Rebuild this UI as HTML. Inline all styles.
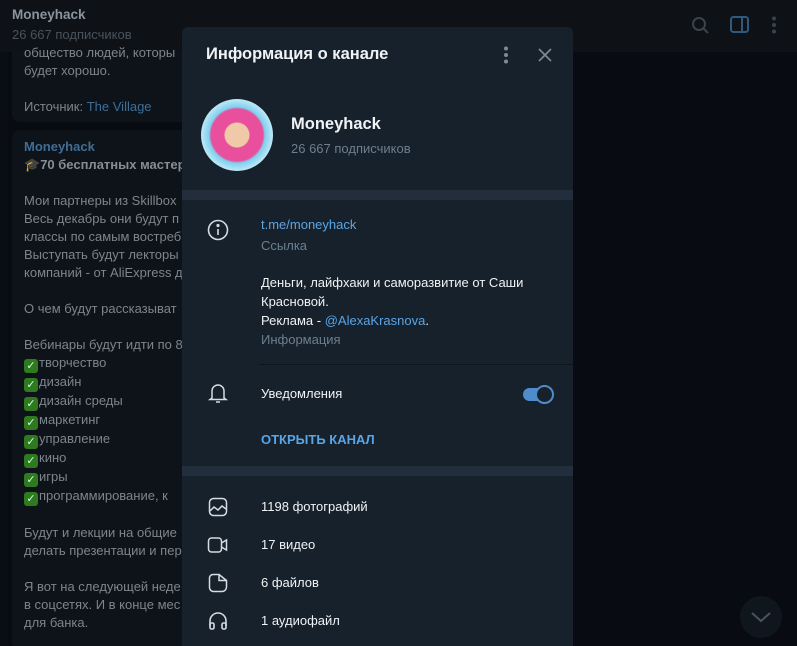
<!DOCTYPE html>
<html style="background:#080b11;overflow:hidden"><head><meta charset="utf-8"><style>
*{margin:0;padding:0;box-sizing:border-box}
body{width:797px;height:646px;overflow:hidden;background:#080b11;font-family:"Liberation Sans","DejaVu Sans",sans-serif;position:relative;font-size:13px}
.hdr{position:absolute;left:0;top:0;width:797px;height:52px;background:#0e1217}
.hdr .t{position:absolute;left:12px;top:7px;color:#8b939c;font-weight:bold;font-size:13.5px}
.hdr .s{position:absolute;left:12px;top:27px;color:#4a525b;font-size:13px}
.strip{position:absolute;left:0;top:52px;width:8px;height:594px;background:#0a0d12}
.bub{position:absolute;left:12px;background:#0e131a;border-radius:8px}
.tx{position:absolute;left:24px;color:#7d848c;font-size:13px;line-height:18px;white-space:pre}
.lk{color:#3d6f99}
.ck{display:inline-block;width:14px;height:14px;background:#2f7a1f;border-radius:3px;vertical-align:-2px;color:#cfd;font-size:11px;line-height:14px;text-align:center;margin-right:1px}
.panel{position:absolute;left:182px;top:27px;width:391px;height:619px;background:#17212b;border-radius:6px 6px 0 0;overflow:hidden}
.panel *{position:absolute}
.w{color:#f0f3f5}
.g{color:#6d7f8f}
.b{color:#5aa5e6}
.band{left:0;width:391px;height:10px;background:#232e3c}
.txt{font-size:13px;white-space:nowrap}
</style></head><body>
<div class="strip"></div>
<div class="bub" style="top:40px;width:180px;height:82px"></div>
<div class="bub" style="top:130px;width:180px;height:520px"></div>
<div class="hdr"><div class="t">Moneyhack</div><div class="s">26 667 подписчиков</div>
<svg style="position:absolute;left:690px;top:15px" width="22" height="22" viewBox="0 0 22 22" fill="none" stroke="#3a424a" stroke-width="2"><circle cx="9" cy="9" r="6"/><path d="M13.5 13.5 18 18"/></svg>
<svg style="position:absolute;left:730px;top:16px" width="20" height="18" viewBox="0 0 20 18" fill="none" stroke="#2f5a80" stroke-width="2"><rect x="1" y="1" width="17" height="15" rx="2.5"/><path d="M12 1v15"/></svg>
<svg style="position:absolute;left:770px;top:16px" width="8" height="18"><circle cx="4" cy="2.5" r="2" fill="#3a424a"/><circle cx="4" cy="9" r="2" fill="#3a424a"/><circle cx="4" cy="15.5" r="2" fill="#3a424a"/></svg>
</div>
<div class="tx" style="top:44px">общество людей, которы
будет хорошо.

Источник: <span class="lk">The Village</span></div>
<div class="tx" style="top:138px"><b style="color:#3f6d94">Moneyhack</b>
🎓<b style="color:#868d95">70 бесплатных мастер</b>

Мои партнеры из Skillbox
Весь декабрь они будут п
классы по самым востреб
Выступать будут лекторы
компаний - от AliExpress д

О чем будут рассказыват

Вебинары будут идти по 8
<span class="ck">✓</span>творчество
<span class="ck">✓</span>дизайн
<span class="ck">✓</span>дизайн среды
<span class="ck">✓</span>маркетинг
<span class="ck">✓</span>управление
<span class="ck">✓</span>кино
<span class="ck">✓</span>игры
<span class="ck">✓</span>программирование, к

Будут и лекции на общие
делать презентации и пер

Я вот на следующей неде
в соцсетях. И в конце мес
для банка.</div>
<div style="position:absolute;left:740px;top:596px;width:42px;height:42px;border-radius:50%;background:#10161d"></div>
<svg style="position:absolute;left:750px;top:610px" width="22" height="14" fill="none" stroke="#4a525b" stroke-width="2"><path d="M2 3l9 8 9-8"/></svg>

<div class="panel">
<div class="w" style="left:24px;top:18px;font-size:16.5px;font-weight:bold">Информация о канале</div>
<svg style="left:320px;top:19px" width="8" height="18"><circle cx="4" cy="2.5" r="2" fill="#7e8a96"/><circle cx="4" cy="9" r="2" fill="#7e8a96"/><circle cx="4" cy="15.5" r="2" fill="#7e8a96"/></svg>
<svg style="left:356px;top:21px" width="14" height="14" stroke="#7e8a96" stroke-width="1.6"><path d="M1 1l12 12M13 1 1 13"/></svg>
<div style="left:19px;top:72px;width:72px;height:72px;border-radius:50%;background:radial-gradient(circle,#f0c9a8 0 12px,#e84f9c 13px 26px,#7fd0ee 28px,#bfe9f8 36px)"></div>
<div class="w" style="left:109px;top:88px;font-size:16.5px;font-weight:bold">Moneyhack</div>
<div class="g txt" style="left:109px;top:114px">26 667 подписчиков</div>
<div class="band" style="top:163px"></div>
<svg style="left:25px;top:192px" width="22" height="22" fill="none" stroke="#d5dbe0" stroke-width="1.6"><circle cx="11" cy="11" r="9.5"/><path d="M11 10v6"/><circle cx="11" cy="6.5" r=".8" fill="#d5dbe0"/></svg>
<div class="b txt" style="left:79px;top:190px">t.me/moneyhack</div>
<div class="g txt" style="left:79px;top:211px">Ссылка</div>
<div class="w txt" style="left:79px;top:246px;line-height:19px">Деньги, лайфхаки и саморазвитие от Саши<br>Красновой.<br>Реклама - <span class="b" style="position:static">@AlexaKrasnova</span>.</div>
<div class="g txt" style="left:79px;top:305px">Информация</div>
<div style="left:77px;top:337px;width:314px;height:1px;background:#0f151c"></div>
<svg style="left:26px;top:355px" width="20" height="22" fill="none" stroke="#d5dbe0" stroke-width="1.5"><path d="M4 16V9a6 6 0 0 1 12 0v7l2 1.5H2z"/><path d="M8 20h4"/></svg>
<div class="w txt" style="left:79px;top:359px">Уведомления</div>
<div style="left:341px;top:361px;width:30px;height:13px;border-radius:7px;background:#4e8ccc"></div>
<div style="left:353px;top:358px;width:19px;height:19px;border-radius:50%;background:#17212b;border:2.5px solid #4e8ccc"></div>
<div class="b txt" style="left:79px;top:405px;font-weight:bold">ОТКРЫТЬ КАНАЛ</div>
<div class="band" style="top:439px"></div>
<svg style="left:26px;top:470px" width="20" height="20" fill="none" stroke="#d5dbe0" stroke-width="1.5"><rect x="1.5" y="1.5" width="17" height="17" rx="4"/><path d="M2 14l4-4 4 3 4-4 4 3"/></svg>
<div class="w txt" style="left:79px;top:472px">1198 фотографий</div>
<svg style="left:25px;top:509px" width="22" height="18" fill="none" stroke="#d5dbe0" stroke-width="1.5"><rect x="1.5" y="2" width="13" height="14" rx="3"/><path d="M14.5 7l5-3v10l-5-3"/></svg>
<div class="w txt" style="left:79px;top:510px">17 видео</div>
<svg style="left:26px;top:546px" width="20" height="20" fill="none" stroke="#d5dbe0" stroke-width="1.5"><path d="M5 1.5h6v6h7.5V14a4.5 4.5 0 0 1-4.5 4.5H5.5A4 4 0 0 1 1.5 14.5V5A3.5 3.5 0 0 1 5 1.5z M11 1.5l7.5 6"/></svg>
<div class="w txt" style="left:79px;top:548px">6 файлов</div>
<svg style="left:26px;top:584px" width="20" height="20" fill="none" stroke="#d5dbe0" stroke-width="1.6"><path d="M2 15v-5a8 8 0 0 1 16 0v5"/><rect x="2" y="12" width="4" height="6" rx="1.5"/><rect x="14" y="12" width="4" height="6" rx="1.5"/></svg>
<div class="w txt" style="left:79px;top:586px">1 аудиофайл</div>
</div>
</body></html>
